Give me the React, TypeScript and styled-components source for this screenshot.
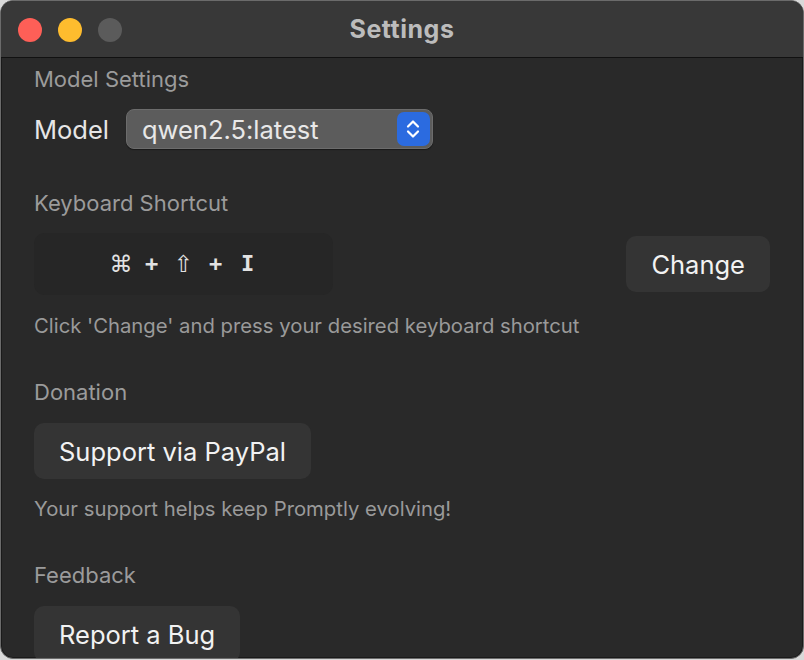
import styled, { createGlobalStyle } from "styled-components";

const GlobalStyle = createGlobalStyle`
  html, body {
    margin: 0;
    padding: 0;
    background: #d9d9d9;
  }
  body {
    font-family: Inter, "Liberation Sans", sans-serif;
    -webkit-font-smoothing: antialiased;
  }
`;

const shortcut = ["⌘", "+", "⇧", "+", "I"];

const App = () => {
  return (
    <>
      <GlobalStyle />
      <Window>
        <TitleBar>
          <Lights>
            <Light color="#fe5f57" />
            <Light color="#febc2e" />
            <Light color="#5b5b5b" />
          </Lights>
          <Title>Settings</Title>
        </TitleBar>
        <Content>
          <SectionLabel>Model Settings</SectionLabel>
          <ModelRow>
            <ModelLabel>Model</ModelLabel>
            <Select>
              <SelectText>qwen2.5:latest</SelectText>
              <Stepper>
                <svg width="16" height="24" viewBox="0 0 16 24" fill="none">
                  <path
                    d="M3 9.5 L8 4.5 L13 9.5"
                    stroke="#fff"
                    strokeWidth="2.2"
                    strokeLinecap="round"
                    strokeLinejoin="round"
                  />
                  <path
                    d="M3 14.5 L8 19.5 L13 14.5"
                    stroke="#fff"
                    strokeWidth="2.2"
                    strokeLinecap="round"
                    strokeLinejoin="round"
                  />
                </svg>
              </Stepper>
            </Select>
          </ModelRow>

          <SectionLabel $gap>Keyboard Shortcut</SectionLabel>
          <ShortcutRow>
            <ShortcutBox>
              {shortcut.map((k, i) => (
                <KeyGlyph key={i} $symbol={k === "⇧" || k === "⌘"}>
                  {k}
                </KeyGlyph>
              ))}
            </ShortcutBox>
            <Button>Change</Button>
          </ShortcutRow>
          <Hint>Click 'Change' and press your desired keyboard shortcut</Hint>

          <SectionLabel $gap>Donation</SectionLabel>
          <ButtonRow>
            <Button>Support via PayPal</Button>
          </ButtonRow>
          <Hint>Your support helps keep Promptly evolving!</Hint>

          <SectionLabel $gap>Feedback</SectionLabel>
          <ButtonRow>
            <Button>Report a Bug</Button>
          </ButtonRow>
        </Content>
      </Window>
    </>
  );
};

const Window = styled.div`
  box-sizing: border-box;
  width: 804px;
  height: 659px;
  border: 1px solid #6b6b6b;
  border-radius: 13px;
  overflow: hidden;
  background: #292929;
  display: flex;
  flex-direction: column;
  box-shadow: 0 0 0 1px #1a1a1a inset;
`;

const TitleBar = styled.div`
  position: relative;
  height: 56px;
  flex-shrink: 0;
  background: #383838;
  border-bottom: 1px solid #111;
  display: flex;
  align-items: center;
  justify-content: center;
`;

const Lights = styled.div`
  position: absolute;
  left: 17px;
  top: 17px;
  display: flex;
  gap: 16px;
`;

const Light = styled.span<{ color: string }>`
  width: 24px;
  height: 24px;
  border-radius: 50%;
  background: ${(p) => p.color};
`;

const Title = styled.h1`
  margin: 0;
  font-size: 25px;
  font-weight: 700;
  color: #bcbcbc;
  letter-spacing: 0.5px;
`;

const Content = styled.div`
  padding: 9px 33px 0 33px;
  display: flex;
  flex-direction: column;
`;

const SectionLabel = styled.div<{ $gap?: boolean }>`
  font-size: 22px;
  line-height: 24px;
  color: #9b9b9b;
  margin-top: ${(p) => (p.$gap ? "42px" : "0")};
`;

const ModelRow = styled.div`
  margin-top: 18px;
  display: flex;
  align-items: center;
  gap: 17px;
`;

const ModelLabel = styled.span`
  font-size: 25.5px;
  color: #e6e6e6;
`;

const Select = styled.div`
  box-sizing: border-box;
  width: 307px;
  height: 40px;
  border-radius: 8px;
  background: #5c5c5c;
  border: 1px solid #6c6c6c;
  box-shadow: 0 1px 1px rgba(0, 0, 0, 0.4);
  display: flex;
  align-items: center;
  justify-content: space-between;
  padding: 0 2px 0 15px;
`;

const SelectText = styled.span`
  font-size: 25.5px;
  color: #e8e8e8;
`;

const Stepper = styled.span`
  width: 33px;
  height: 34px;
  border-radius: 7px;
  background: #2b6be0;
  display: flex;
  align-items: center;
  justify-content: center;
`;

const ShortcutRow = styled.div`
  margin-top: 18px;
  margin-bottom: 1px;
  display: flex;
  align-items: center;
  justify-content: space-between;
`;

const ShortcutBox = styled.div`
  width: 299px;
  height: 62px;
  border-radius: 11px;
  background: #262626;
  display: flex;
  align-items: center;
  justify-content: center;
  gap: 12px;
  color: #e2e2e2;
`;

const KeyGlyph = styled.span<{ $symbol?: boolean }>`
  width: 20px;
  text-align: center;
  font-family: ${(p) =>
    p.$symbol ? '"DejaVu Sans", sans-serif' : '"DejaVu Sans Mono", monospace'};
  font-size: ${(p) => (p.$symbol ? "23px" : "22px")};
  font-weight: ${(p) => (p.$symbol ? 400 : 700)};
  line-height: 1;
`;

const Button = styled.button`
  height: 56px;
  padding: 0 25px;
  border: none;
  border-radius: 10px;
  background: #343434;
  color: #f2f2f2;
  font-family: Inter, "Liberation Sans", sans-serif;
  font-size: 25.5px;
`;

const ButtonRow = styled.div`
  margin-top: 19px;
  display: flex;
`;

const Hint = styled.div`
  margin-top: 18px;
  font-size: 20.3px;
  line-height: 24px;
  color: #9a9a9a;
`;

export default App;
